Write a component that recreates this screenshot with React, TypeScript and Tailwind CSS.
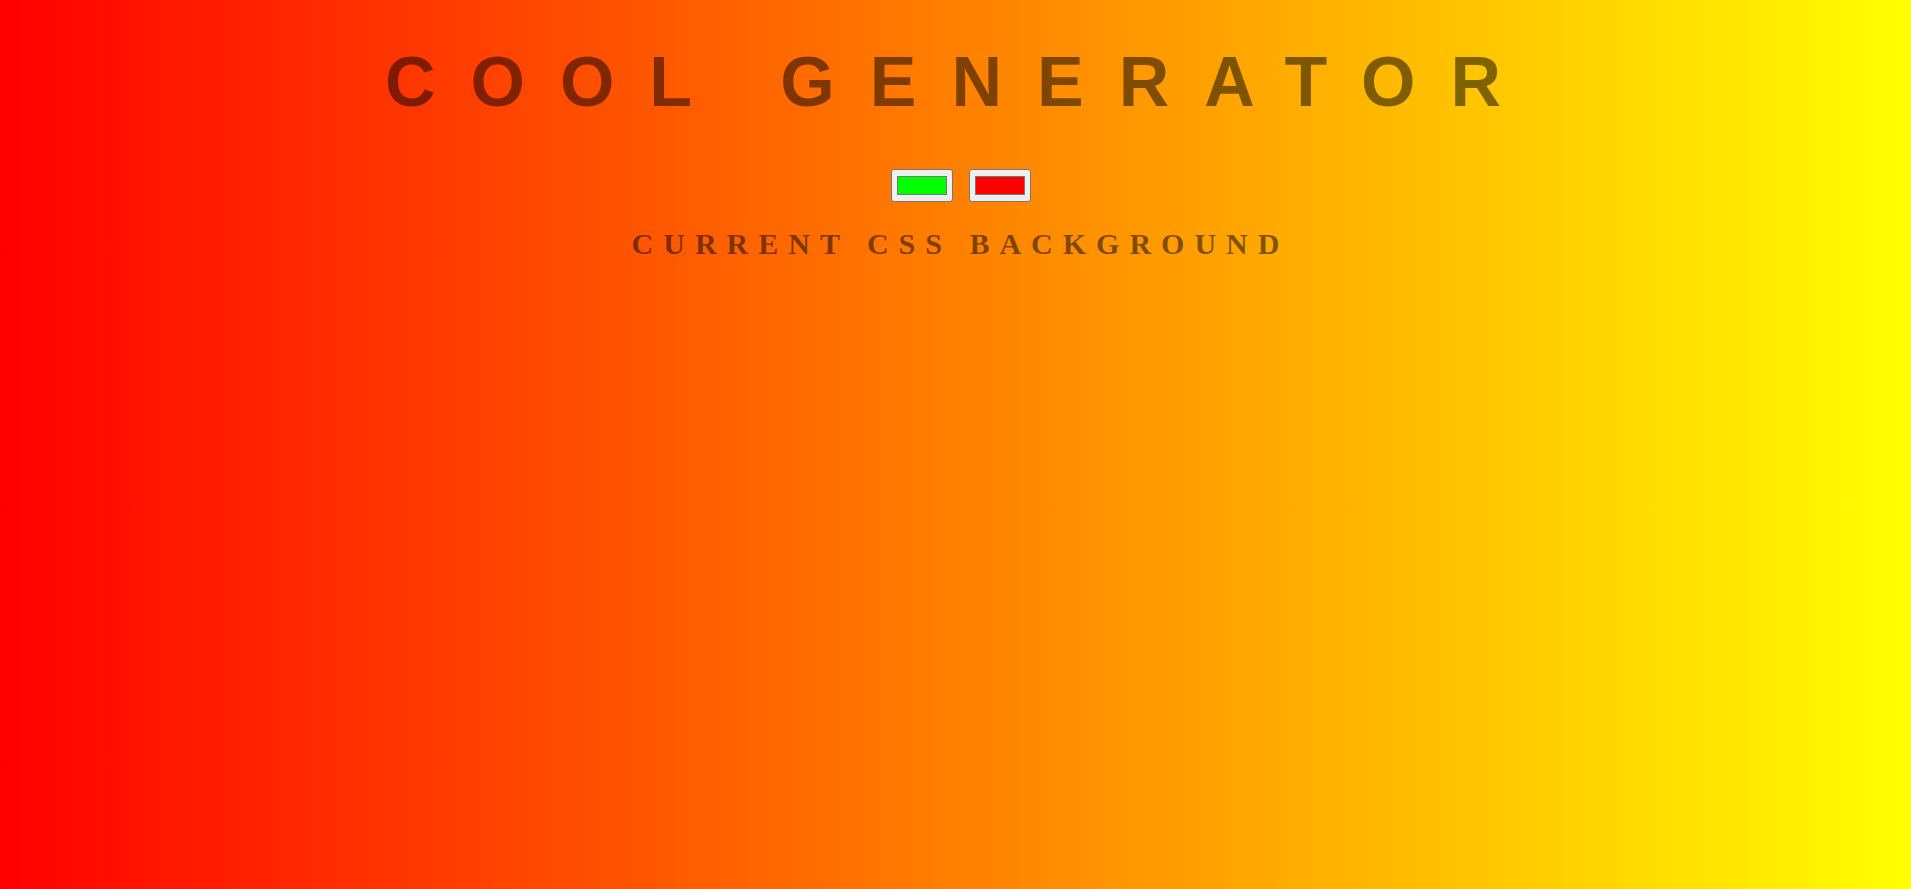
const swatches = ["#00ff00", "#ff0000"];

function ColorBox({ color }: { color: string }) {
  return (
    <div className="flex h-[33px] w-[62px] items-center justify-center rounded-[3px] border border-[#767676] bg-[#efefef]">
      <div className="h-[19px] w-[50px] border border-[#777777]" style={{ backgroundColor: color }} />
    </div>
  );
}

export default function App() {
  return (
    <div className="min-h-[889px] w-full bg-[linear-gradient(to_right,#ff0000,#ffff00)] pt-[42px] pl-[10px] text-center text-black/50">
      <h1 className="h-[80px] font-['Liberation_Sans',Arial,sans-serif] text-[70px] font-bold uppercase leading-[80px] tracking-[35px]">
        Cool Generator
      </h1>
      <div className="mt-[47px] flex justify-center gap-[16px]">
        {swatches.map((c) => (
          <ColorBox key={c} color={c} />
        ))}
      </div>
      <h3 className="mt-[24px] font-['Liberation_Serif','Times_New_Roman',serif] text-[30px] font-bold uppercase leading-[36px] tracking-[10px]">
        Current CSS Background
      </h3>
    </div>
  );
}
